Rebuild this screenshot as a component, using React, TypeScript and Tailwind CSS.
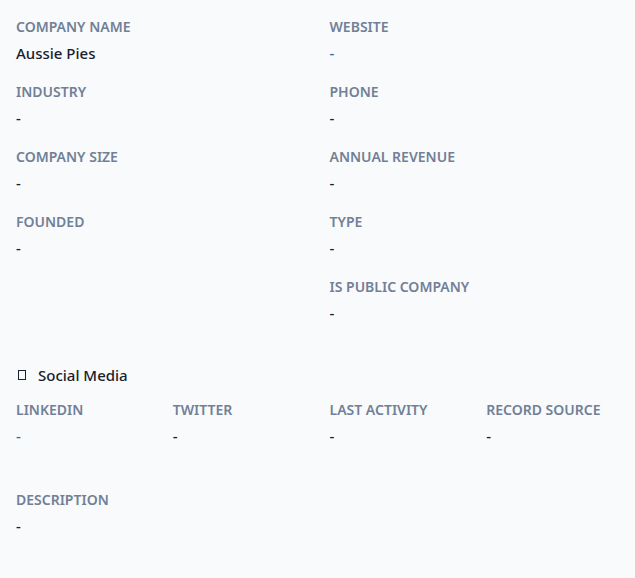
const fields: { label: string; value: string; link?: boolean }[][] = [
  [
    { label: "Company Name", value: "Aussie Pies" },
    { label: "Industry", value: "-" },
    { label: "Company Size", value: "-" },
    { label: "Founded", value: "-" },
  ],
  [
    { label: "Website", value: "-", link: true },
    { label: "Phone", value: "-" },
    { label: "Annual Revenue", value: "-" },
    { label: "Type", value: "-" },
    { label: "Is Public Company", value: "-" },
  ],
];

const social = [
  { label: "LinkedIn", value: "-", link: true },
  { label: "Twitter", value: "-" },
  { label: "Last Activity", value: "-" },
  { label: "Record Source", value: "-" },
];

function Field({ label, value, link }: { label: string; value: string; link?: boolean }) {
  return (
    <div className="flex flex-col gap-1">
      <p className="text-sm leading-5 font-semibold uppercase text-[#718096]">{label}</p>
      <p className={`text-[15px] leading-6 font-medium ${link ? "text-[#2b6cb0]" : "text-[#1a202c]"}`}>
        {value}
      </p>
    </div>
  );
}

export default function App() {
  return (
    <div
      className="min-h-[578px] w-[635px] bg-[#f8fafc] px-4 pt-[17px] pb-6"
      style={{ fontFamily: '"Noto Sans", "Open Sans", sans-serif' }}
    >
      {/* Company details */}
      <div className="grid grid-cols-2 gap-x-6">
        {fields.map((col, i) => (
          <div key={i} className="flex flex-col gap-[17px]">
            {col.map((f) => (
              <Field key={f.label} {...f} />
            ))}
          </div>
        ))}
      </div>

      {/* Social Media */}
      <div className="mt-[38px]">
        <div className="flex items-center gap-3 pl-[2px]">
          <span className="inline-block h-[10px] w-2 border border-[#1a202c]" />
          <h3 className="text-[15px] leading-6 font-medium text-[#1a202c]">Social Media</h3>
        </div>
        <div className="mt-[13px] grid grid-cols-4 gap-x-6">
          {social.map((f) => (
            <Field key={f.label} {...f} />
          ))}
        </div>
      </div>

      {/* Description */}
      <div className="mt-[42px]">
        <Field label="Description" value="-" />
      </div>
    </div>
  );
}
